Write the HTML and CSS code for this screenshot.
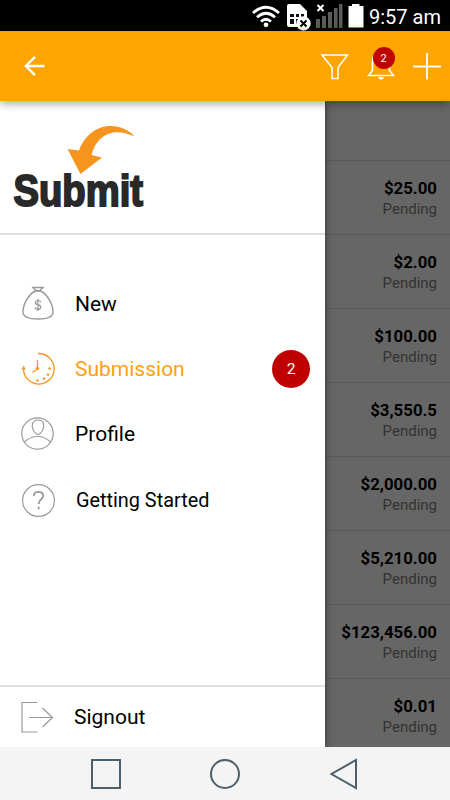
FILE: index.html
```html
<!DOCTYPE html>
<html lang="en">
<head>
<meta charset="utf-8">
<title>Submit</title>
<link rel="stylesheet" href="styles.css">
</head>
<body>
<div class="phone">
  <header class="status">
    <svg class="status-icons" width="126" height="31" viewBox="0 0 126 31">
      <g fill="none" stroke="#fff" stroke-width="2.800">
        <path d="M1 13Q14 1.500 27 13"/>
        <path d="M5 17.300Q14 9.300 23 17.300"/>
        <path d="M9 21.500Q14 17 19 21.500"/>
      </g>
      <circle cx="14" cy="24.800" r="2.400" fill="#fff"/>
      <path d="M35 6q0-2 2-2h11l7 7v14q0 2-2 2H37q-2 0-2-2z" fill="#fff"/>
      <path d="M38 14h4v3h-4zM44 14h3v3h-3zM49 14h3v3h-3zM38 19h4v5h-4zM44 19h3v5h-3z" fill="#111"/>
      <circle cx="51.500" cy="23.500" r="7.200" fill="#fff"/>
      <path d="M48.500 20.500l6 6M54.500 20.500l-6 6" stroke="#000" stroke-width="2"/>
      <path d="M65.500 5l6 6M71.500 5l-6 6" stroke="#fff" stroke-width="2"/>
      <path d="M64 19h4v9h-4zM70 16h4v12h-4zM76 12h4v16h-4zM82 8h3.500v20H82zM87 4h3.500v24H87z" fill="#5c5c5c"/>
      <path d="M96.500 6h3.500V4h7.500v2h4v21.500h-15z" fill="#fff"/>
    </svg>
    <span class="time">9:57 am</span>
  </header>

  <nav class="appbar">
    <svg width="22" height="22" viewBox="0 0 22 22" fill="none" stroke="#fff" stroke-width="2.400"><path d="M21.500 11H3.500M12 1.800L2.800 11l9.200 9.200"/></svg>
    <div class="actions">
      <svg width="30" height="30" viewBox="0 0 30 30" fill="none" stroke="#fff" stroke-width="1.500"><path d="M2 4h25.500L18 16.500v11h-6v-11z"/></svg>
      <div class="bell">
        <svg width="28" height="30" viewBox="0 0 28 30" fill="none" stroke="#fff" stroke-width="1.700"><path d="M5.500 19.500V11Q5.500 3 14 3T22.500 11v8.500l4 5H1.500z"/><path d="M11.500 26.800h5q-2.500 3-5 0z" fill="#fff" stroke-width="1"/></svg>
        <span class="bell-count">2</span>
      </div>
      <svg width="30" height="30" viewBox="0 0 30 30" stroke="#fff" stroke-width="1.800"><path d="M1 15.500h28M15 2v26.500"/></svg>
    </div>
  </nav>

  <main class="content">
    <aside class="drawer">
      <div class="brand">
        <svg width="170" height="132" viewBox="0 0 170 132">
          <text class="wordmark" x="13.500" y="105" textLength="129.500" lengthAdjust="spacingAndGlyphs">Submit</text>
          <path d="M134.500 35.500C121 20.500 91 19 79 49.500L67.500 48 80.500 73 102 56.500 91.500 54C97 32 115 26 134.500 35.500z" fill="#f7941e"/>
        </svg>
      </div>
      <ul class="menu">
        <li class="item">
          <svg class="icon" width="34" height="36" viewBox="0 0 34 36" fill="none" stroke="#999" stroke-width="1.400"><path d="M13.500 5.500C8 8 2 18 2 26Q2 33 17 33T32 26C32 18 26 8 20.500 5.500Q17 4 13.500 5.500z"/><path d="M12 1.500h10l-3.500 3.500h-3z"/><path d="M19.700 16.200Q19.500 14.500 17 14.500T14.400 16.700Q14.400 18.200 17 18.700T19.700 21.300Q19.700 23.300 17 23.300T14.200 21.300M17 12.700v12.300" stroke-width="1.200"/></svg>
          <span>New</span>
        </li>
        <li class="item active">
          <svg class="icon" width="34" height="34" viewBox="0 0 34 34" fill="none" stroke="#f79420" stroke-width="1.300"><path d="M17 1.500A15.300 15.300 0 1 1 2.500 17.500"/><path d="M.8 17.500l1.800-3.500 1.800 3.500z" fill="#f79420" stroke-width=".5"/><path d="M16.500 8v8.500L11.500 20.500"/><g fill="#f79420" stroke="none"><circle cx="16.500" cy="16.500" r="1.700"/><circle cx="28.500" cy="16.500" r="1.200"/><circle cx="27" cy="22.500" r="1.200"/><circle cx="23" cy="26.500" r="1.200"/><circle cx="16.500" cy="28.500" r="1.200"/></g></svg>
          <span>Submission</span>
          <span class="count">2</span>
        </li>
        <li class="item">
          <svg class="icon" width="34" height="34" viewBox="0 0 34 34" fill="none" stroke="#999" stroke-width="1.200"><circle cx="16.500" cy="16.500" r="15.700"/><path d="M17 3C11 3 10 8.500 12.500 13.500Q15 17.500 17 17.500T21.500 13.500C24 8.500 23 3 17 3zM3.500 25Q9 19.500 16.500 19.500T29.500 25"/></svg>
          <span>Profile</span>
        </li>
        <li class="item">
          <svg class="icon" width="36" height="34" viewBox="0 0 36 34" fill="none" stroke="#999" stroke-width="1.200"><circle cx="17.500" cy="16.500" r="15.900"/><path d="M12.800 12Q13 7.800 17.500 7.800T22.200 11.800C22.200 15 17.700 15.500 17.700 20M17.700 22.700v2.600" stroke-width="1.800"/></svg>
          <span>Getting Started</span>
        </li>
      </ul>
      <div class="signout">
        <svg class="icon" width="34" height="34" viewBox="0 0 34 34" fill="none" stroke="#999" stroke-width="1.200"><path d="M16.500 2.500H1v29.500h15.500M8 17.500h23.500M21.500 8l10 9.500-10 9.500"/></svg>
        <span>Signout</span>
      </div>
    </aside>
    <section class="list">
      <div class="list-head"></div>
      <div class="row"><b>$25.00</b><span>Pending</span></div>
      <div class="row"><b>$2.00</b><span>Pending</span></div>
      <div class="row"><b>$100.00</b><span>Pending</span></div>
      <div class="row"><b>$3,550.5</b><span>Pending</span></div>
      <div class="row"><b>$2,000.00</b><span>Pending</span></div>
      <div class="row"><b>$5,210.00</b><span>Pending</span></div>
      <div class="row"><b>$123,456.00</b><span>Pending</span></div>
      <div class="row"><b>$0.01</b><span>Pending</span></div>
    </section>
  </main>

  <footer class="navbar">
    <svg width="32" height="32" viewBox="0 0 32 32"><path d="M2 2h28v28H2z"/></svg>
    <svg width="32" height="32" viewBox="0 0 32 32"><circle cx="16" cy="16" r="14"/></svg>
    <svg width="32" height="32" viewBox="0 0 32 32"><path d="M28 2v28L3.500 16z"/></svg>
  </footer>
</div>
</body>
</html>
```

FILE: styles.css
```css
* { box-sizing: border-box; }
body { margin: 0; font-family: Roboto, "Liberation Sans", sans-serif; }
svg { display: block; flex: none; }
.phone { width: 450px; height: 800px; display: flex; flex-direction: column; overflow: hidden; }

.status { height: 31px; background: #000; color: #fff; display: flex; align-items: center; justify-content: flex-end; padding-right: 9px; }
.status-icons { margin-right: -9px; }
.status .time { width: 72px; font-size: 20px; line-height: 31px; padding-top: 3px; white-space: nowrap; }

.appbar { height: 70px; flex: none; background: #ffa500; display: flex; align-items: center; justify-content: space-between; padding: 0 8.500px 0 23px; position: relative; z-index: 2; box-shadow: 0 2px 9px rgba(0, 0, 0, .4); }
.actions { display: flex; gap: 17px; }
.bell { position: relative; }
.bell-count { position: absolute; left: 6px; top: -4px; width: 22px; height: 22px; border-radius: 50%; background: #c00000; color: #fff; font-size: 11px; line-height: 24px; text-align: center; }

.content { height: 646px; flex: none; display: flex; overflow: hidden; }
.drawer { width: 325px; flex: none; background: #fff; display: flex; flex-direction: column; position: relative; z-index: 1; box-shadow: 0 0 7px rgba(0, 0, 0, .55); }
.brand { height: 134px; border-bottom: 2px solid #e0e0e0; }
.wordmark { font-family: "Liberation Sans", sans-serif; font-size: 45px; font-weight: bold; fill: #292929; stroke: #292929; stroke-width: 2px; }
.menu { list-style: none; margin: 0; padding: 36px 15px 0 21px; flex: 1; }
.item { height: 65px; display: flex; align-items: center; font-size: 21px; color: #000; }
.item:last-child { height: 69px; font-size: 19.850px; }
.icon { margin-right: 20px; }
.item:last-child .icon { margin-right: 19px; }
.active { color: #ffa012; }
.count { margin-left: auto; width: 38px; height: 38px; border-radius: 50%; background: #c00000; color: #fff; font-size: 15.500px; line-height: 39px; text-align: center; }
.signout { height: 62px; border-top: 2px solid #e0e0e0; padding-left: 21px; display: flex; align-items: center; font-size: 21px; }
.signout .icon { margin-right: 19px; }

.list { flex: 1; background: #666; }
.list-head { height: 60px; border-bottom: 1px solid #5a5a5a; }
.row { height: 74px; border-bottom: 1px solid #5a5a5a; padding: 16px 13px 0 0; display: flex; flex-direction: column; align-items: flex-end; }
.row b { font-size: 16.800px; line-height: 22px; color: #000; }
.row span { font-size: 15px; line-height: 21px; color: #333; }

.navbar { height: 53px; flex: none; background: #f4f4f4; display: flex; justify-content: center; gap: 87px; align-items: center; }
.navbar svg { fill: none; stroke: #4c5f6b; stroke-width: 2; }
```
